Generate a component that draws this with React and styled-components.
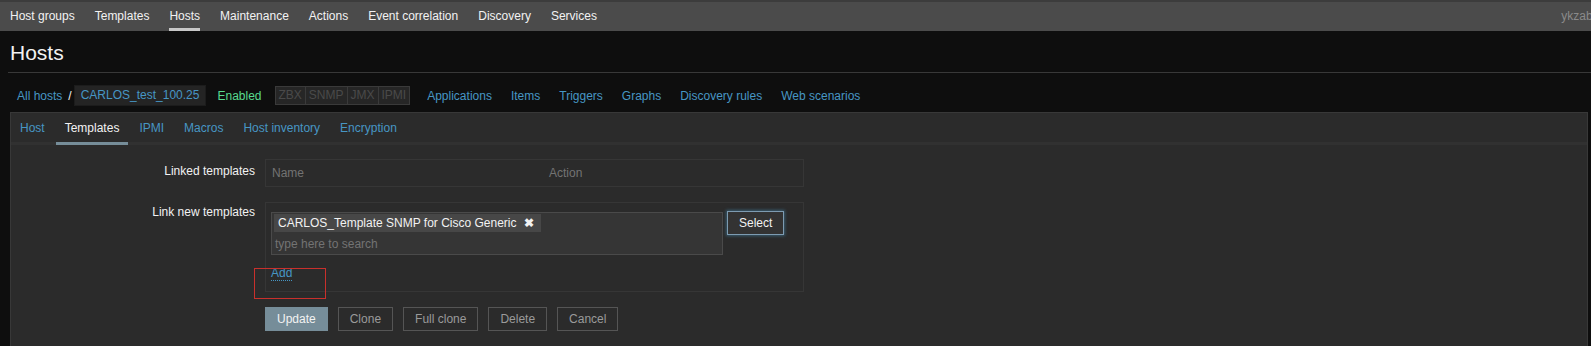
import React from 'react';
import styled, { createGlobalStyle, css } from 'styled-components';

const GlobalStyle = createGlobalStyle`
  body {
    margin: 0;
    background: #0e0e0e;
    color: #f2f2f2;
    font-family: "Liberation Sans", Arial, sans-serif;
    font-size: 12px;
    overflow: hidden;
  }
`;

const TopNav = styled.div`
  height: 31px;
  box-sizing: border-box;
  display: flex;
  align-items: stretch;
  background: #4b4b4b;
  border-top: 2px solid #3c3c3c;
  padding-left: 10px;
`;

const TopItems = styled.ul`
  display: flex;
  gap: 20px;
  margin: 0;
  padding: 0;
  list-style: none;
  flex: 1;
`;

const TopItem = styled.li`
  position: relative;
  line-height: 28px;
  color: #f2f2f2;
  ${p => p.$active && css`
    &::after {
      content: '';
      position: absolute;
      left: 0;
      right: 0;
      bottom: 0;
      height: 3px;
      background: #c8c8c8;
    }
  `}
`;

const UserName = styled.span`
  line-height: 28px;
  color: #8a8a8a;
  margin-right: -17px;
`;

const Header = styled.div`
  margin-left: 8px;
  padding: 10px 0 7px 2px;
  border-bottom: 1px solid #383838;
`;

const Title = styled.h1`
  margin: 0;
  font-size: 21px;
  line-height: 24px;
  font-weight: normal;
  color: #f2f2f2;
`;

const Wrapper = styled.div`
  padding: 0 3px 0 10px;
`;

const Breadcrumbs = styled.div`
  display: flex;
  align-items: center;
  height: 21px;
  padding: 12px 0 6px 7px;
`;

const Link = styled.a`
  color: #4796c4;
  text-decoration: none;
`;

const Sep = styled.span`
  margin: 0 2px 0 6px;
  color: #f2f2f2;
`;

const HostBox = styled.span`
  display: inline-block;
  line-height: 19px;
  padding: 0 6px;
  background: #242424;
  border: 1px solid #1c1c1c;
  color: #4796c4;
`;

const Status = styled.span`
  color: #59db8f;
  margin: 0 13px 0 11px;
`;

const Availability = styled.span`
  display: inline-flex;
  border: 1px solid #3a3a3a;
  background: #262626;
  margin-right: 17px;
`;

const AvItem = styled.span`
  line-height: 17px;
  padding: 0 3px;
  color: #4a4a4a;
  & + & {
    border-left: 1px solid #3a3a3a;
  }
`;

const HostLinks = styled.div`
  display: flex;
  gap: 19px;
`;

const Container = styled.div`
  background: #2b2b2b;
  border: 1px solid #383838;
  border-bottom: none;
  min-height: 260px;
`;

const TabBar = styled.div`
  display: flex;
  gap: 2px;
  border-bottom: 3px solid #313131;
`;

const Tab = styled.span`
  padding: 1px 9px 0;
  line-height: 28px;
  margin-bottom: -3px;
  border-bottom: 3px solid transparent;
  color: #4796c4;
  ${p => p.$active && css`
    color: #f2f2f2;
    border-bottom-color: #768d99;
  `}
`;

const Form = styled.div`
  display: grid;
  row-gap: 15px;
  padding-top: 14px;
`;

const Row = styled.div`
  display: grid;
  grid-template-columns: 244px 539px;
  column-gap: 10px;
  align-items: start;
`;

const Label = styled.label`
  text-align: right;
  line-height: 14px;
  padding-top: ${p => p.$pt}px;
  color: #f2f2f2;
`;

const TableBox = styled.div`
  display: grid;
  grid-template-columns: 277px 1fr;
  height: 28px;
  box-sizing: border-box;
  border: 1px solid #363636;
  padding: 0 6px;
  align-items: center;
  color: #737373;
`;

const FieldBox = styled.div`
  border: 1px solid #363636;
  padding: 9px 5px 0;
`;

const SelectLine = styled.div`
  display: flex;
  align-items: flex-start;
`;

const MultiSelect = styled.div`
  width: 452px;
  box-sizing: border-box;
  border: 1px solid #4a4a4a;
  background: #353535;
  padding: 1px 2px 3px;
`;

const Token = styled.span`
  display: inline-flex;
  align-items: center;
  height: 18px;
  padding: 0 7px 0 4px;
  background: #474747;
  color: #f2f2f2;
`;

const Remove = styled.span`
  margin-left: 7px;
  font-size: 12px;
  font-weight: bold;
  color: #f2f2f2;
`;

const Search = styled.div`
  margin-top: 5px;
  padding-left: 1px;
  line-height: 14px;
  color: #737373;
`;

const SelectButton = styled.button`
  margin: -1px 0 0 4px;
  height: 24px;
  padding: 0 11px;
  font: inherit;
  color: #f2f2f2;
  background: #333;
  border: 1px solid #7d9bb1;
  box-shadow: 0 0 3px 1px rgba(71, 150, 196, 0.45);
`;

const AddLine = styled.div`
  padding: 11px 0 11px;
  line-height: 14px;
`;

const AddWrap = styled.span`
  position: relative;
  display: inline-block;
`;

const AddLink = styled.a`
  color: #4796c4;
  text-decoration: none;
  border-bottom: 1px dotted #4796c4;
`;

const Highlight = styled.span`
  position: absolute;
  left: -17px;
  top: 2px;
  width: 72px;
  height: 31px;
  box-sizing: border-box;
  border: 1px solid #c9302c;
  pointer-events: none;
`;

const Buttons = styled.div`
  grid-column: 2;
  display: flex;
  gap: 10px;
`;

const Button = styled.button`
  height: 24px;
  padding: 0 11px;
  font: inherit;
  color: #9a9a9a;
  background: transparent;
  border: 1px solid #555;
  ${p => p.$primary && css`
    color: #f2f2f2;
    background: #768d99;
    border-color: #768d99;
  `}
`;

const navItems = ['Host groups', 'Templates', 'Hosts', 'Maintenance', 'Actions', 'Event correlation', 'Discovery', 'Services'];
const tabs = ['Host', 'Templates', 'IPMI', 'Macros', 'Host inventory', 'Encryption'];
const hostLinks = ['Applications', 'Items', 'Triggers', 'Graphs', 'Discovery rules', 'Web scenarios'];

export default function App() {
  return (
    <>
      <GlobalStyle />
      <TopNav>
        <TopItems>
          {navItems.map(n => (
            <TopItem key={n} $active={n === 'Hosts'}>{n}</TopItem>
          ))}
        </TopItems>
        <UserName>ykzabbix</UserName>
      </TopNav>
      <Header>
        <Title>Hosts</Title>
      </Header>
      <Wrapper>
        <Breadcrumbs>
          <Link>All hosts</Link>
          <Sep>/</Sep>
          <HostBox>CARLOS_test_100.25</HostBox>
          <Status>Enabled</Status>
          <Availability>
            {['ZBX', 'SNMP', 'JMX', 'IPMI'].map(a => <AvItem key={a}>{a}</AvItem>)}
          </Availability>
          <HostLinks>
            {hostLinks.map(l => <Link key={l}>{l}</Link>)}
          </HostLinks>
        </Breadcrumbs>
        <Container>
          <TabBar>
            {tabs.map(t => <Tab key={t} $active={t === 'Templates'}>{t}</Tab>)}
          </TabBar>
          <Form>
            <Row>
              <Label $pt={5}>Linked templates</Label>
              <TableBox>
                <span>Name</span>
                <span>Action</span>
              </TableBox>
            </Row>
            <Row>
              <Label $pt={3}>Link new templates</Label>
              <FieldBox>
                <SelectLine>
                  <MultiSelect>
                    <Token>
                      CARLOS_Template SNMP for Cisco Generic
                      <Remove>✖</Remove>
                    </Token>
                    <Search>type here to search</Search>
                  </MultiSelect>
                  <SelectButton>Select</SelectButton>
                </SelectLine>
                <AddLine>
                  <AddWrap>
                    <AddLink>Add</AddLink>
                    <Highlight />
                  </AddWrap>
                </AddLine>
              </FieldBox>
            </Row>
            <Row>
              <Buttons>
                <Button $primary>Update</Button>
                <Button>Clone</Button>
                <Button>Full clone</Button>
                <Button>Delete</Button>
                <Button>Cancel</Button>
              </Buttons>
            </Row>
          </Form>
        </Container>
      </Wrapper>
    </>
  );
}
